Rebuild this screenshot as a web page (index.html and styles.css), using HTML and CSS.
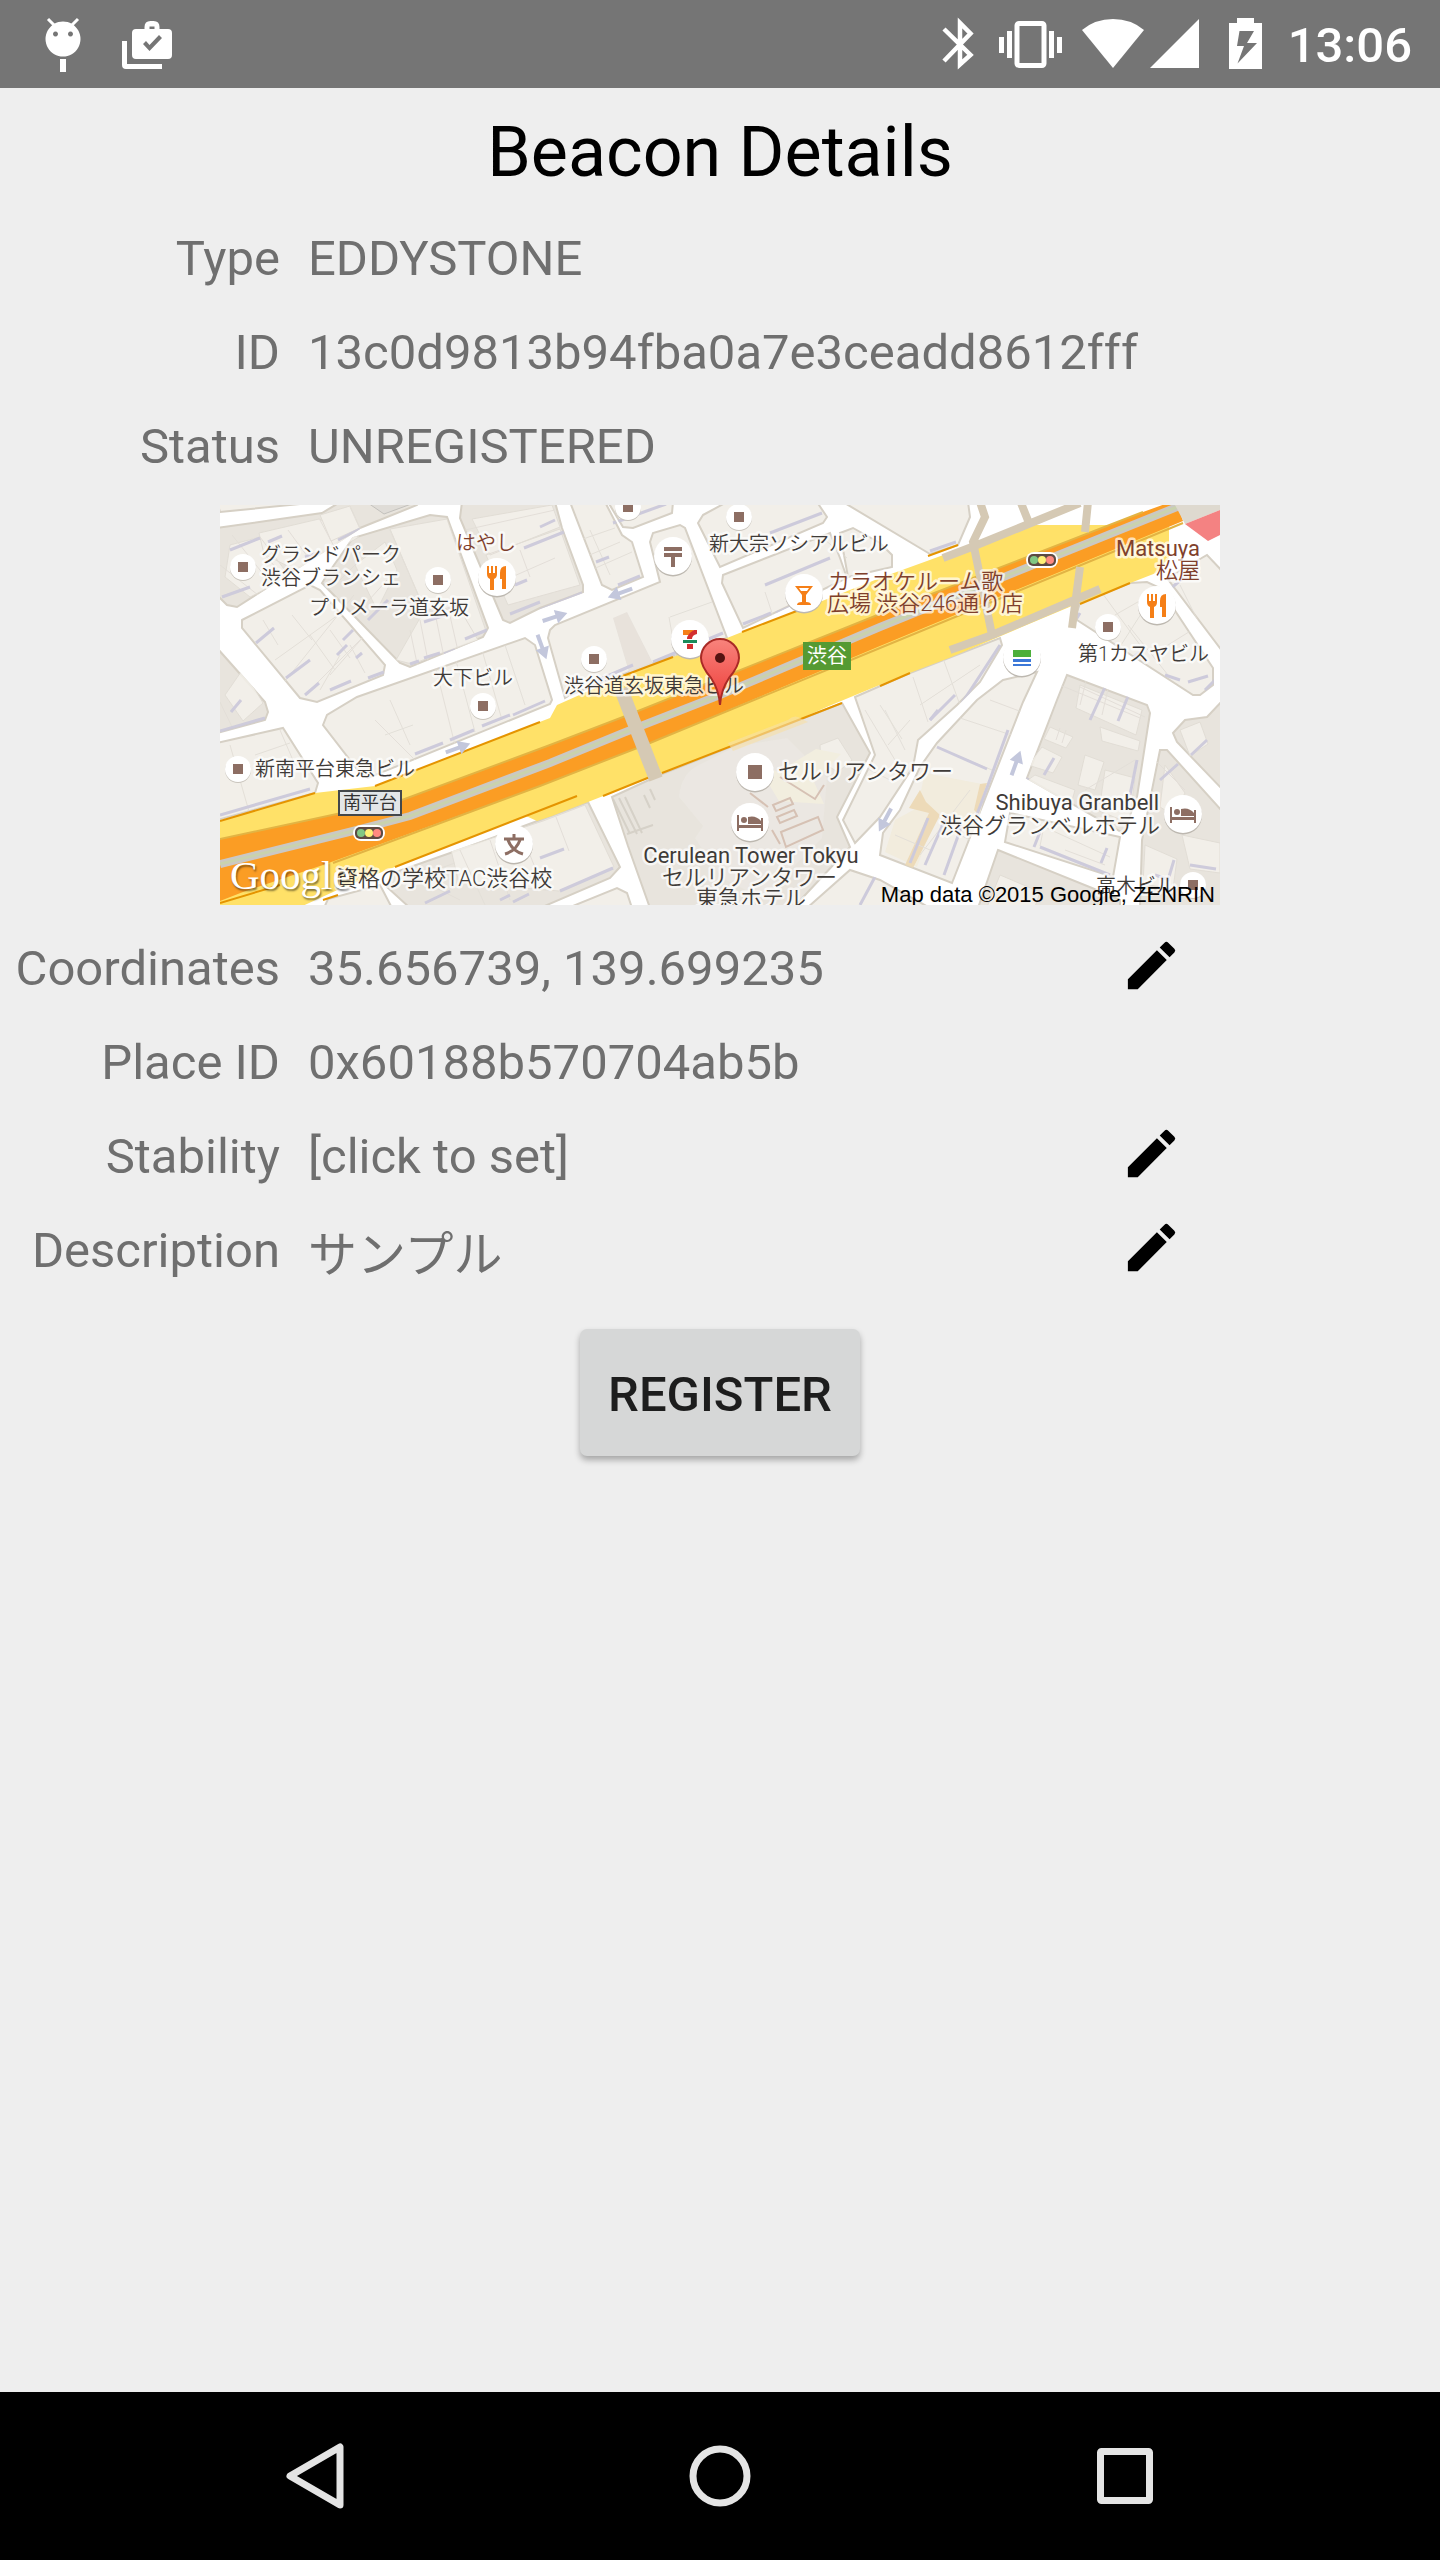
FILE: index.html
```html
<!DOCTYPE html>
<html lang="en">
<head>
    <meta charset="UTF-8">
    <meta name="viewport" content="width=device-width, initial-scale=1.0">
    <title>Beacon Details</title>
    <link rel="stylesheet" href="styles.css">
</head>
<body>
    <header class="status-bar">
        <div class="notifications">
            <svg width="84" height="88" viewBox="0 0 84 88" fill="#fff">
                <path d="M27 19l6 6M57 19l-6 6" stroke="#fff" stroke-width="3"/>
                <path fill-rule="evenodd" d="M42 21.500a17.500 17.500 0 1 0 .01 0zM34.500 31.500a2.500 2.500 0 1 1-.01 0zM49.500 31.500a2.500 2.500 0 1 1-.01 0z"/>
                <path d="M39 59h6v13h-6z"/>
            </svg>
            <svg width="84" height="88" viewBox="0 0 84 88" fill="#fff">
                <path d="M17 41h5v23h35v5H21q-4 0-4-4z"/>
                <path fill-rule="evenodd" d="M31 29h8.500v-2q0-6 6-6h3q6 0 6 6v2H63q4 0 4 4v22q0 4-4 4H31q-4 0-4-4V33q0-4 4-4zM44.500 29h5v-2.500h-5zM38 44l6.500 7L57 38l-3-3-9.500 10-3.500-4z"/>
            </svg>
        </div>
        <div class="system">
            <svg width="70" height="88" viewBox="0 0 70 88" fill="none" stroke="#fff" stroke-width="4.500">
                <path d="M24 29l26.500 26L40 64.500V23l10.500 10.500L24 61"/>
            </svg>
            <svg width="82" height="88" viewBox="0 0 82 88" fill="#fff">
                <rect x="27" y="23.500" width="27" height="42" rx="2" fill="none" stroke="#fff" stroke-width="5"/>
                <path d="M9 37h5v16H9zM17 31h5v27h-5zM59 31h5v27h-5zM67 37h5v16h-5z"/>
            </svg>
            <svg width="76" height="88" viewBox="0 0 76 88" fill="#fff">
                <path d="M41 68L10 30q13-11 31-11t31 11z"/>
            </svg>
            <svg width="58" height="88" viewBox="0 0 58 88" fill="#fff">
                <path d="M2 68L51 19v49z"/>
            </svg>
            <svg width="82" height="88" viewBox="0 0 82 88" fill="#fff">
                <path fill-rule="evenodd" d="M23 23h8v-5h17v5h8v46H23zM33.500 31l-2.500 15h7l-6.500 17.500L51 43H41l7-12z"/>
            </svg>
            <span class="clock">13:06</span>
        </div>
    </header>

    <main class="details">
        <h1>Beacon Details</h1>
        <div class="row">
            <span class="label">Type</span>
            <span class="value">EDDYSTONE</span>
        </div>
        <div class="row">
            <span class="label">ID</span>
            <span class="value">13c0d9813b94fba0a7e3ceadd8612fff</span>
        </div>
        <div class="row">
            <span class="label">Status</span>
            <span class="value">UNREGISTERED</span>
        </div>

        <svg class="map" viewBox="0 0 1000 400" lang="ja">
            <defs>
                <g id="poi">
                    <circle cy="1" r="13" fill="#c9c4bc"/>
                    <circle r="13" fill="#fff"/>
                    <path d="M-5-5H5V5H-5z" fill="#8d6e63"/>
                </g>
                <g id="disc">
                    <circle cy="1.500" r="19" fill="#bdb8b0"/>
                    <circle r="19" fill="#fff"/>
                </g>
                <g id="fork" fill="#f57f17">
                    <path d="M-10-11h2v7h2v-7h2v7h2v-7h2v8q0 4-3 5v11h-4V2q-3-1-3-5zM9-11v23H5V2H3v-6q0-7 6-7z"/>
                </g>
                <g id="bed" fill="#8d6e63">
                    <path d="M-13-8h2V2H11V-5h2V8h-2V5h-22V8h-2zM-2 1v-7q8-2 13 4v3z"/>
                    <circle cx="-6" cy="-3" r="3"/>
                </g>
                <g id="signal">
                    <rect x="-16" y="-8" width="32" height="16" rx="8" fill="#fff"/>
                    <rect x="-14" y="-6" width="28" height="12" rx="5" fill="#5d4a42"/>
                    <circle cx="-8" r="4" fill="#81c784"/>
                    <circle r="4" fill="#fff176"/>
                    <circle cx="8" r="4" fill="#ff8a80"/>
                </g>
                <path id="arrow" d="M-13-2H1v-5L13 0 1 7V2h-14z" fill="#c3c7dc"/>
                <linearGradient id="pin" x2="0" y2="1">
                    <stop offset="0" stop-color="#f8837c"/>
                    <stop offset="1" stop-color="#ee3c38"/>
                </linearGradient>
                <mask id="land" maskUnits="userSpaceOnUse" x="0" y="0" width="1000" height="400">
                    <use href="#blocks"/>
                </mask>
            </defs>

            <rect width="1000" height="400" fill="#fff"/>

            <g class="blocks" id="blocks">
                <path d="M-3-3H100L0 7z"/>
                <path class="dark" d="M-3 23L60 14l42-6 20-12h78l-3 4-57 23L17 102 7 100-3 90z"/>
                <path class="dark" d="M107 70l26-37 77-23 17 2 41 111-5 9-73 30-10-4-78-80z"/>
                <path d="M22 115L90 80l10 5 65 75-2 10-66 27-17-4-58-70z"/>
                <path class="dark" d="M242-3l-2 16 43 102 7 3 30-15 43-16v-7L342 23 335-3z"/>
                <path d="M350-3l32 83 10 5 31-13-11-35-10-7-17-33z"/>
                <path d="M388-3l15 25 10 1 39-15 1-11z"/>
                <path d="M330 125l5-5 105-43-10-40 3-9 27-8 5 3 42 110-74 25-83 32-5 3-17-60z"/>
                <path d="M483 10L507-3h90l10 15-4 6-103 44-22-44z"/>
                <path d="M503 70l107-42 10 25 7 20-104 50-21-45z"/>
                <path d="M620 28l13-5 27 15 12 12v12l-44 10z"/>
                <path d="M623-3l87 52 28-9 12-28-2-15z"/>
                <path d="M857 107l3-9 50-20 17-1 13 6 53 80v17l-13 10h-7L857 115z"/>
                <path d="M947 73l40-23 16 17v80z"/>
                <path d="M635 192l55-24 90-35 2 7-22 37-23 23-39 35-5 27-33 50-25 26-12-23 32-65z"/>
                <path class="dark" d="M392 292l50-23 180-71 28 50-33 64 13 30-43 46-14 15H430l-22-62z"/>
                <path class="dark" d="M320 315l48-18 32 65-10 11-70 30H190l-23-21 6-14 80-28z"/>
                <path d="M348 403l49-20 10 5 5 15z"/>
                <path d="M104 403l4-9 52-14 12 23z"/>
                <path d="M-3 238l66-15 35 55-3 10-98 27z"/>
                <path class="dark" d="M-3 143l48 54 3 10-3 8-48 13z"/>
                <path d="M103 220l4-10 30-18 168-59 10 7 17 55-2 4-182 74-8-5z"/>
                <path d="M783 175l34-8-14 30-71 181-72-28 3-22 17-23 20-43 17-24 40-43z"/>
                <path class="dark" d="M847 170l80 30 3 8-13 84-14 36-96-55 30-78z"/>
                <path class="dark" d="M953 228l12-13 22-3 16-17v90l-46-48z"/>
                <path class="dark" d="M940 245h7l56 62v96h-83l2-68z"/>
                <path d="M790 308l110 24-7 40-108-35z"/>
                <path class="dark" d="M778 345l99 40 23 10v8H758z"/>
                <path d="M587 403l43-38 30 10 50 28z"/>
            </g>

            <g mask="url(#land)">
                <g class="houses">
                    <path d="M170 24l57-10 39 112-23 9-28-32-10 3z"/>
                    <path d="M39 28l60-14 40 18-60 35-35-18zM10 40l30-8 30 40-40 20-25-20z"/>
                    <path d="M100 10l30-9 10 22-29 13zM252 14l80-14 8 22-70 28zM288 100l-22-50 74-26 20 56z"/>
                    <path d="M176 155l24-42 38-12 20 34-66 24zM135 60l30-23 12 28-20 40z"/>
                    <path d="M323 316l42-16 29 62-55 24-100-8-9-37 24-2z"/>
                    <path d="M600 240l18-7 14 22-14 12-17-10z"/>
                    <path d="M830 222l23 10-7 11-22-9zM822 242l20 10-9 16-25-8zM865 250l19 7-9 28-17-5zM880 222l40 14-2 10-36-10zM860 180l62 25-6 25-60-27z"/>
                    <path d="M885 265l30 8-6 45-30-12zM815 270l40 15-4 14-46-22zM945 260l20 28-12 22-13-8zM925 340l32 14-4 30-30-5zM962 330l38 8v30l-30-4z"/>
                    <path d="M780 370l40 17-5 15h-48zM960 225l20-8 8 22-18 12zM5 190l18-26 20 34-20 18z"/>
                </g>
                <path d="M459 292q2-25 22-33l36-18 50-8 40 40-5 60-60 60-40-20-27-40 8-12z" fill="#ebe8e2"/>
                <path d="M558 267l38-23 25 5-27 28 10 22-45-3-24-40z" fill="#f3efdf"/>
                <path d="M705 268l62 12-12 50-40-18-18 50-32-15 10-32 22-12z" fill="#f1ecdc"/>
                <path d="M700 285l6 12 14 13-27 53-8-3 24-52-20-5zM767 278l-10 30-3-3 6-26z" fill="#ecd9b4"/>
                <path d="M561 327l37-15 5 13-37 17zM553 300l17-7 3 6-17 7zM557 312l17-7 3 6-17 7zM560 272l35 22 9-14M530 288l18 14M552 325l8 14" fill="none" stroke="#d3bdae" stroke-width="2"/>
                <path d="M393 294l17 35M399 293l18 36M405 292l17 36M407 329l26-9M424 290l6 13M430 284l5 11" stroke="#d3cfc5" stroke-width="2" fill="none"/>
                <path d="M393 113l14-6 38 75-28 12z" fill="#e6e1da"/>

                <g class="walls">
                    <path d="M45 50l24 28M68 25l22 30M100 15l17 32M130 2l10 22M12 30l40 50M0 60l38 30"/>
                    <path d="M43 115l15 25M72 110l20 25M55 155l70-50M90 130l25 35M110 125l20 28M130 140l15 28M62 180l72-90M85 190l60-60M100 185l20-35M145 130l-35 40"/>
                    <path d="M170 25l35 80M200 115l9 46M190 125l8 38M215 108l9 44M228 102l10 44M205 110l32-10M120 75l30-30M140 105l27-30"/>
                    <path d="M245 25l90-20M285 75l50-22M300 45l10 27M370 25l20 45M360 35l35-12M365 52l35-15M371 65l41-18"/>
                    <path d="M450 112l42-15M449 112l7 40M545 87l9 27M605 35l22 18M515 62l90-35"/>
                    <path d="M720 145l20 55M693 172l15 45M700 200l60-40M880 85l40 55M895 110l35-20M870 130l50 30M930 95l-45 70M908 120l40 50M960 80l30 60M940 145l40-25"/>
                    <path d="M717 242l55 23M740 213l60 20M770 195l40 15M690 215l-22 25M665 205l20 40M700 350l50-65M720 320l30 15M675 330l35 15"/>
                    <path d="M870 160l-10 40M890 175l-8 35M860 182l65 30M835 178l85 35M840 223l-4 12M846 225l-4 13M915 255l-50 30M820 320l70 32M825 316l-5 25M845 345l40 15M930 250l35 35"/>
                    <path d="M10 240l20 70M60 225l15 35M35 250l35-12M12 222l-12-25M155 215l40 40M165 230l28-10M170 195l20 45M215 160l20 80M235 152l20 75M262 145l20 70M285 140l20 60"/>
                    <path d="M240 345l25 55M270 335l20 60M300 325l20 50M336 312l13 34M200 375l40 20M215 365l20-7"/>
                    <path d="M645 205l30 50M660 200l22 34M640 260l30 15"/>
                </g>
                <g class="shadows">
                    <path d="M10 45l30-12M2 92l28-10M118 35l22-11M85 52l16-5M48 37l14-6"/>
                    <path d="M36 138l18-15M66 173l24-18M85 190l14-12M110 185l21-9M117 150l10-10M123 135l10-10M148 173l16-6M136 153l6-5"/>
                    <path d="M190 159l9-3M204 153l16-5M224 149l11-4M245 134l22-9M204 117l24-8M148 115l20-20M290 109l30-12M295 80l12-5M304 43l40-16"/>
                    <path d="M320 105l42-17M398 80l22-9M376 57l13-5M320 22l15-7M393 18l18-6M410 12l36-13M550 28l52-20"/>
                    <path d="M433 157l70-29M378 175l35-15M545 80l65-27M523 119l28-11M556 108l15-6"/>
                    <path d="M710 46l26-9M780 140l-38 58M718 205l-8 10M860 108l-3 5M928 103l35-30M905 160l15-13M968 177l20-6M985 185l10-10M945 170l15 5M970 108l20 42"/>
                    <path d="M0 310l90-26M0 226l45-13M195 249l28-11M230 235l24-10M262 221l28-11M293 210l32-14M11 207l10-12"/>
                    <path d="M320 353l24-9M340 386l53-23M205 398l25-12M280 395l10-5M293 397l16-8"/>
                    <path d="M768 280l-12 32M788 225l-20 55M705 360l22-50M690 358l18-45M724 370l18-50M717 242l50 22M710 215l25-25M870 215l16-35M898 216l13-32M910 290l7-35M824 270l10-17M808 273l-6 10"/>
                    <path d="M814 342l6-15M820 342l70 28M887 343l-6 15M971 250l16-15M940 275l18-16M935 370l15 5M948 375l6-20M970 360l26 4M640 400l16-30"/>
                </g>
            </g>
            <path class="station" d="M148-2l16 11 30-11z"/>

            <!-- expressway -->
            <path class="avenue" d="M0 316l95-28 60-7 175-68 7-13 63-28 53-20 54-19 15-6 65-25 73-29 47-17 49-18 51-18h142v33l-13 15-77 30-50 21-80 34-50 19-70 29-38 17-180 70-59 23-15 5-11-5-27 10-155 61-72 33-103 38z"/>
            <path class="curb" d="M0 316l95-28M155 281l165-64M400 172l53-20M522 127l65-25M708 51l30-11M910 78l-50 21M690 168l-30 13M622 198l-180 70M430 272l-47 19M357 291L175 362M103 395l15-5M0 398l60-18"/>
            <path class="lanes" d="M0 334l182-39 148-55 73-28 257-103 263-102 25-9h9l6 18-303 125-230 97-110 43-217 79-80 27-23 9z"/>
            <path class="lane-edge" d="M0 334l182-39 148-55 73-28 257-103 263-102M963 18L660 143 430 238l-110 43-207 77"/>
            <path d="M0 359l133-33q30-8 57-15l140-53 73-30 97-38 160-68L957 2" fill="none" stroke="#cbc8c4" stroke-width="8"/>
            <path d="M0 359l133-33q30-8 57-15l140-53 73-30 97-38 160-68L957 2" fill="none" stroke="#c9d2ae" stroke-width="3"/>
            <path d="M508 238l60-23q5-5 10-3l10 5-75 29z" fill="#f6dfa7" opacity=".6"/>

            <g class="bridges">
                <path d="M760-3l5 15-12 25 19 93-42 15M723 53l34-13L860-2M801-2l8 20M868-3l-3 30M860 62l-8 61M772 130l108-46" stroke-width="8"/>
                <path d="M401 184l35 90" stroke-width="14"/>
            </g>
            <path d="M955 0h45v5l-35 14z" fill="#ded9cf"/>
            <path d="M965 19l35-14v25l-12 6z" fill="#f48282"/>

            <use href="#arrow" transform="translate(322 142) rotate(70)"/>
            <use href="#arrow" transform="translate(335 112) rotate(-18)"/>
            <use href="#arrow" transform="translate(400 88) rotate(160)"/>
            <use href="#arrow" transform="translate(238 243) rotate(-20)"/>
            <use href="#arrow" transform="translate(796 258) rotate(-70)"/>
            <use href="#arrow" transform="translate(665 315) rotate(118)"/>

            <!-- places -->
            <use href="#poi" x="23" y="62"/>
            <use href="#poi" x="218" y="75"/>
            <use href="#poi" x="408" y="2"/>
            <use href="#poi" x="519" y="12"/>
            <use href="#poi" x="374" y="154"/>
            <use href="#poi" x="263" y="201"/>
            <use href="#poi" x="18" y="264"/>
            <use href="#poi" x="888" y="122"/>
            <use href="#poi" x="973" y="380"/>
            <use href="#disc" x="277" y="72"/><use href="#fork" x="277" y="72"/>
            <use href="#disc" x="937" y="100"/><use href="#fork" x="937" y="100"/>
            <use href="#disc" x="453" y="51"/>
            <path d="M444 42h18v4h-18zM444 48h18v4h-7v10h-4V52h-7z" fill="#8d6e63"/>
            <use href="#disc" x="584" y="88"/>
            <path d="M575 81h18l-7 9v7q5 0 5 3h-14q0-3 5-3v-7zM579 83l2 3h6l2-3z" fill="#f57f17" fill-rule="evenodd"/>
            <use href="#disc" x="470" y="134"/>
            <path d="M463 125h11l-4 5h-7z" fill="#f57f17"/>
            <path d="M474 125h3v4q-5 1-5 5h-5q0-5 7-9zM467 139h6v5h-6z" fill="#d32f2f"/>
            <path d="M463 135h14v3h-14z" fill="#1b8a5a"/>
            <use href="#disc" x="802" y="152"/>
            <path d="M793 145h18v7h-18z" fill="#4caf3a"/>
            <path d="M793 154h18v3h-18zM793 159h18v2h-18z" fill="#3c78d8"/>
            <use href="#disc" x="535" y="267"/><path d="M528 260h14v14h-14z" fill="#8d6e63"/>
            <use href="#disc" x="530" y="317"/><use href="#bed" x="530" y="318"/>
            <use href="#disc" x="963" y="309"/><use href="#bed" x="963" y="310"/>
            <use href="#disc" x="294" y="339"/>
            <path d="M284 334h20M294 329v5M288 335q4 11 15 14M300 335q-4 11-15 14" fill="none" stroke="#8d6e63" stroke-width="3"/>
            <use href="#signal" x="822" y="55"/>
            <use href="#signal" x="149" y="328"/>

            <g class="names">
                <text x="41" y="57">グランドパーク</text>
                <text x="41" y="80">渋谷ブランシェ</text>
                <text x="89" y="110">プリメーラ道玄坂</text>
                <text x="213" y="180">大下ビル</text>
                <text class="food" x="236" y="45">はやし</text>
                <text x="489" y="46">新大宗ソシアルビル</text>
                <text x="344" y="188">渋谷道玄坂東急ビル</text>
                <text class="food big" x="608" y="84">カラオケルーム歌</text>
                <text class="food big" x="607" y="106">広場 渋谷246通り店</text>
                <text class="food big latin" x="980" y="51" text-anchor="end">Matsuya</text>
                <text class="food big" x="936" y="73">松屋</text>
                <text x="858" y="156">第1カスヤビル</text>
                <text x="35" y="271">新南平台東急ビル</text>
                <text class="big" x="116" y="381">資格の学校TAC渋谷校</text>
                <text class="big" x="558" y="274">セルリアンタワー</text>
                <text class="big latin" x="531" y="358" text-anchor="middle">Cerulean Tower Tokyu</text>
                <text class="big" x="442" y="380">セルリアンタワー</text>
                <text class="big" x="476" y="401">東急ホテル</text>
                <text class="big latin" x="939" y="305" text-anchor="end">Shibuya Granbell</text>
                <text class="big" x="720" y="328">渋谷グランベルホテル</text>
                <text x="876" y="388">高木ビル</text>
            </g>
            <rect x="583" y="137" width="48" height="28" fill="#559a33"/>
            <text class="sign" x="587" y="158" fill="#fff">渋谷</text>
            <rect x="119" y="286" width="62" height="24" fill="#e3e6e8" stroke="#43474b" stroke-width="2"/>
            <text class="plate" x="123" y="304" fill="#333">南平台</text>

            <path d="M500 200q-1-15-9-27-10-12-10-20a19 19 0 0 1 38 0q0 8-10 20-8 12-9 27z" fill="url(#pin)" stroke="#a92a26" stroke-width="2"/>
            <circle cx="500" cy="153" r="5" fill="#541311"/>

            <text class="logo" x="10" y="384">Google</text>
            <text class="credit" x="995" y="397" text-anchor="end">Map data ©2015 Google, ZENRIN</text>
        </svg>

        <div class="row">
            <span class="label">Coordinates</span>
            <span class="value">35.656739, 139.699235</span>
            <button class="edit" aria-label="Edit coordinates">
                <svg viewBox="0 0 24 24"><path d="M3 17.250V21h3.750L17.810 9.940l-3.750-3.750L3 17.250zM20.710 7.040a1 1 0 0 0 0-1.410l-2.340-2.340a1 1 0 0 0-1.410 0l-1.830 1.830 3.750 3.750 1.830-1.830z"/></svg>
            </button>
        </div>
        <div class="row">
            <span class="label">Place ID</span>
            <span class="value">0x60188b570704ab5b</span>
        </div>
        <div class="row">
            <span class="label">Stability</span>
            <span class="value">[click to set]</span>
            <button class="edit" aria-label="Edit stability">
                <svg viewBox="0 0 24 24"><path d="M3 17.250V21h3.750L17.810 9.940l-3.750-3.750L3 17.250zM20.710 7.040a1 1 0 0 0 0-1.410l-2.340-2.340a1 1 0 0 0-1.410 0l-1.830 1.830 3.750 3.750 1.830-1.830z"/></svg>
            </button>
        </div>
        <div class="row">
            <span class="label">Description</span>
            <span class="value" lang="ja">サンプル</span>
            <button class="edit" aria-label="Edit description">
                <svg viewBox="0 0 24 24"><path d="M3 17.250V21h3.750L17.810 9.940l-3.750-3.750L3 17.250zM20.710 7.040a1 1 0 0 0 0-1.410l-2.340-2.340a1 1 0 0 0-1.410 0l-1.830 1.830 3.750 3.750 1.830-1.830z"/></svg>
            </button>
        </div>

        <button class="register">REGISTER</button>
    </main>

    <nav class="nav-bar">
        <button aria-label="Back">
            <svg width="72" height="72" viewBox="0 0 72 72"><path d="M61 7v58L11 36z"/></svg>
        </button>
        <button aria-label="Home">
            <svg width="72" height="72" viewBox="0 0 72 72"><circle cx="36" cy="36" r="27"/></svg>
        </button>
        <button aria-label="Recent apps">
            <svg width="72" height="72" viewBox="0 0 72 72"><rect x="11.500" y="11.500" width="49" height="49" rx="1"/></svg>
        </button>
    </nav>
</body>
</html>
```
FILE: styles.css
```css
body {
    margin: 0;
    min-height: 100vh;
    display: flex;
    flex-direction: column;
    background: #eeeeee;
    color: #6f6f6f;
    font-family: Roboto, "Noto Sans CJK JP", sans-serif;
    font-size: 49px;
}
button {
    border: none;
    padding: 0;
    background: none;
    font-family: inherit;
    cursor: pointer;
}
svg {
    display: block;
}

/* top bar */
.status-bar {
    display: flex;
    justify-content: space-between;
    height: 88px;
    padding: 0 28px 0 21px;
    background: #757575;
}
.notifications,
.system {
    display: flex;
    align-items: center;
}
.clock {
    padding-top: 4px;
    color: #fff;
    font-weight: 500;
    line-height: 84px;
}

/* content */
.details {
    flex: 1;
    display: flex;
    flex-direction: column;
}
h1 {
    margin: 23px 0 18px;
    color: #000;
    font-size: 70px;
    font-weight: 400;
    line-height: 82px;
    text-align: center;
}
.row {
    display: grid;
    grid-template-columns: 280px 1fr 320px;
    column-gap: 28px;
    align-items: center;
    height: 94px;
}
.label {
    text-align: right;
}
.value {
    white-space: nowrap;
}
.edit {
    width: 63px;
    padding-bottom: 6px;
}
.edit svg {
    width: 63px;
    height: 63px;
}
.register {
    align-self: center;
    margin-top: 32px;
    padding: 4px 28px 0;
    height: 127px;
    border-radius: 7px;
    background: #d6d7d7;
    box-shadow: 0 4px 6px rgba(0, 0, 0, 0.3);
    color: #1d1d1d;
    font-size: 49px;
    font-weight: 500;
}

/* map */
.map {
    align-self: center;
    width: 1000px;
    max-width: 100%;
    margin: 12px 0 16px;
}
.blocks path {
    fill: #f2efe9;
    stroke: #d6d0c5;
    stroke-width: 2;
}
.blocks .dark {
    fill: #e8e4dd;
}
.houses path {
    fill: #f3f0ea;
    stroke: #e0dcd4;
}
.walls path {
    fill: none;
    stroke: #e2ded7;
}
.shadows path {
    fill: none;
    stroke: #cac8da;
    stroke-width: 3;
}
.station {
    fill: #dfdcd7;
    stroke: #c2c0bc;
}
.avenue {
    fill: #ffe168;
}
.curb {
    fill: none;
    stroke: #e59400;
    stroke-width: 2;
}
.lanes {
    fill: #fb9d24;
}
.lane-edge {
    fill: none;
    stroke: #e2b444;
    stroke-width: 2;
}
.bridges path {
    fill: none;
    stroke: #d5c9b4;
}
.names text {
    fill: #3f3b38;
    stroke: rgba(255, 255, 255, 0.7);
    stroke-width: 5px;
    stroke-linejoin: round;
    paint-order: stroke;
    font-size: 20px;
    font-weight: 350;
}
.names .big {
    font-size: 22px;
}
.names .latin {
    font-weight: 400;
}
.names .food {
    fill: #7f3f2c;
}
.sign {
    font-size: 20px;
}
.plate {
    font-size: 18px;
}
.logo {
    fill: #fff;
    font-family: "Liberation Serif", serif;
    font-size: 41px;
    text-shadow: 1px 2px 2px rgba(0, 0, 0, 0.5);
}
.credit {
    fill: #000;
    font-family: "Liberation Sans", Arial, sans-serif;
    font-size: 22px;
}

/* bottom bar */
.nav-bar {
    display: flex;
    justify-content: center;
    height: 168px;
    background: #000;
}
.nav-bar button {
    display: flex;
    align-items: center;
    justify-content: center;
    width: 405px;
}
.nav-bar svg {
    fill: none;
    stroke: #e4e4e4;
    stroke-width: 7;
    stroke-linejoin: round;
}
```
